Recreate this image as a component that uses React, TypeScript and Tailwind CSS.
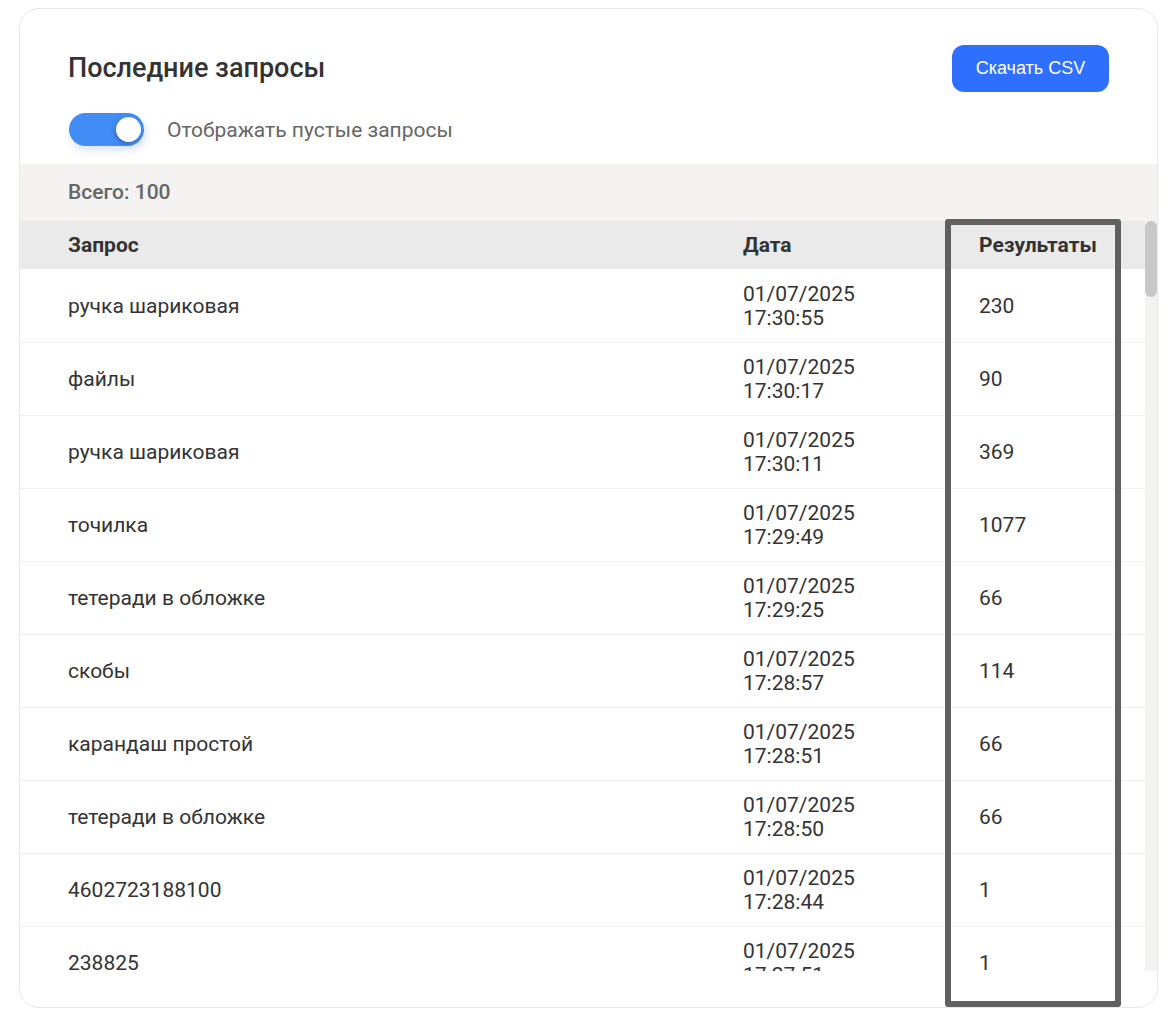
const rows = [
  { query: "ручка шариковая", date: "01/07/2025", time: "17:30:55", results: "230" },
  { query: "файлы", date: "01/07/2025", time: "17:30:17", results: "90" },
  { query: "ручка шариковая", date: "01/07/2025", time: "17:30:11", results: "369" },
  { query: "точилка", date: "01/07/2025", time: "17:29:49", results: "1077" },
  { query: "тетеради в обложке", date: "01/07/2025", time: "17:29:25", results: "66" },
  { query: "скобы", date: "01/07/2025", time: "17:28:57", results: "114" },
  { query: "карандаш простой", date: "01/07/2025", time: "17:28:51", results: "66" },
  { query: "тетеради в обложке", date: "01/07/2025", time: "17:28:50", results: "66" },
  { query: "4602723188100", date: "01/07/2025", time: "17:28:44", results: "1" },
  { query: "238825", date: "01/07/2025", time: "17:27:51", results: "1" },
];

export default function App() {
  return (
    <div className="h-[1020px] w-[1176px] overflow-hidden bg-white pl-[19px] pt-2 font-['Roboto',sans-serif] text-[#333333]">
      <div className="relative h-[1000px] w-[1139px] overflow-hidden rounded-[20px] border border-[#e8e8e8] bg-white">
        {/* Header */}
        <div className="h-[155px] pl-[48px] pr-[48px] pt-9">
          <div className="flex h-[47px] items-center justify-between">
            <h1 className="pb-0.5 text-[27px] font-medium leading-7">Последние запросы</h1>
            <button
              type="button"
              className="h-[47px] w-[157px] rounded-xl bg-[#2f6fff] font-['Liberation_Sans',sans-serif] text-[18px] text-white"
            >
              Скачать CSV
            </button>
          </div>
          <div className="mt-[21px] flex items-center gap-[23px]">
            <div className="ml-px flex h-[33px] w-[75px] items-center justify-end rounded-full bg-[#428cf5] pr-[3px] shadow-[2px_4px_8px_rgba(40,90,180,0.18)]">
              <div className="h-[25px] w-[25px] rounded-full bg-white shadow-[-1px_2px_4px_rgba(30,70,160,0.5)]" />
            </div>
            <span className="pt-0.5 text-[21px] text-[#666666]">Отображать пустые запросы</span>
          </div>
        </div>

        {/* Total */}
        <div className="flex h-[57px] items-center bg-[#f4f3f2] pl-[48px] text-[21px] font-medium text-[#666666]">
          Всего: 100
        </div>

        {/* Table */}
        <div className="flex h-[750px]">
          <div className="w-[1125px] overflow-hidden">
            <div className="mb-px grid h-12 grid-cols-[675px_236px_1fr] items-center bg-[#eaeaea] pl-[48px] pt-0.5 text-[21px] font-bold">
              <span>Запрос</span>
              <span>Дата</span>
              <span>Результаты</span>
            </div>
            {rows.map((row, i) => (
              <div
                key={i}
                className="grid h-[73px] grid-cols-[675px_236px_1fr] items-center border-b border-[#f1f1f1] pl-[48px] text-[21px]"
              >
                <span className="pt-0.5">{row.query}</span>
                <span className="leading-6">
                  {row.date}
                  <br />
                  {row.time}
                </span>
                <span className="pt-0.5">{row.results}</span>
              </div>
            ))}
          </div>
          <div className="h-full w-3 bg-[#f4f3f2]">
            <div className="h-[76px] w-3 rounded-md bg-[#c8c8c8]" />
          </div>
        </div>

        {/* Highlight frame */}
        <div className="absolute left-[925px] top-[210px] h-[788px] w-[176px] rounded-[3px] border-[6px] border-[#606060]" />
      </div>
    </div>
  );
}
